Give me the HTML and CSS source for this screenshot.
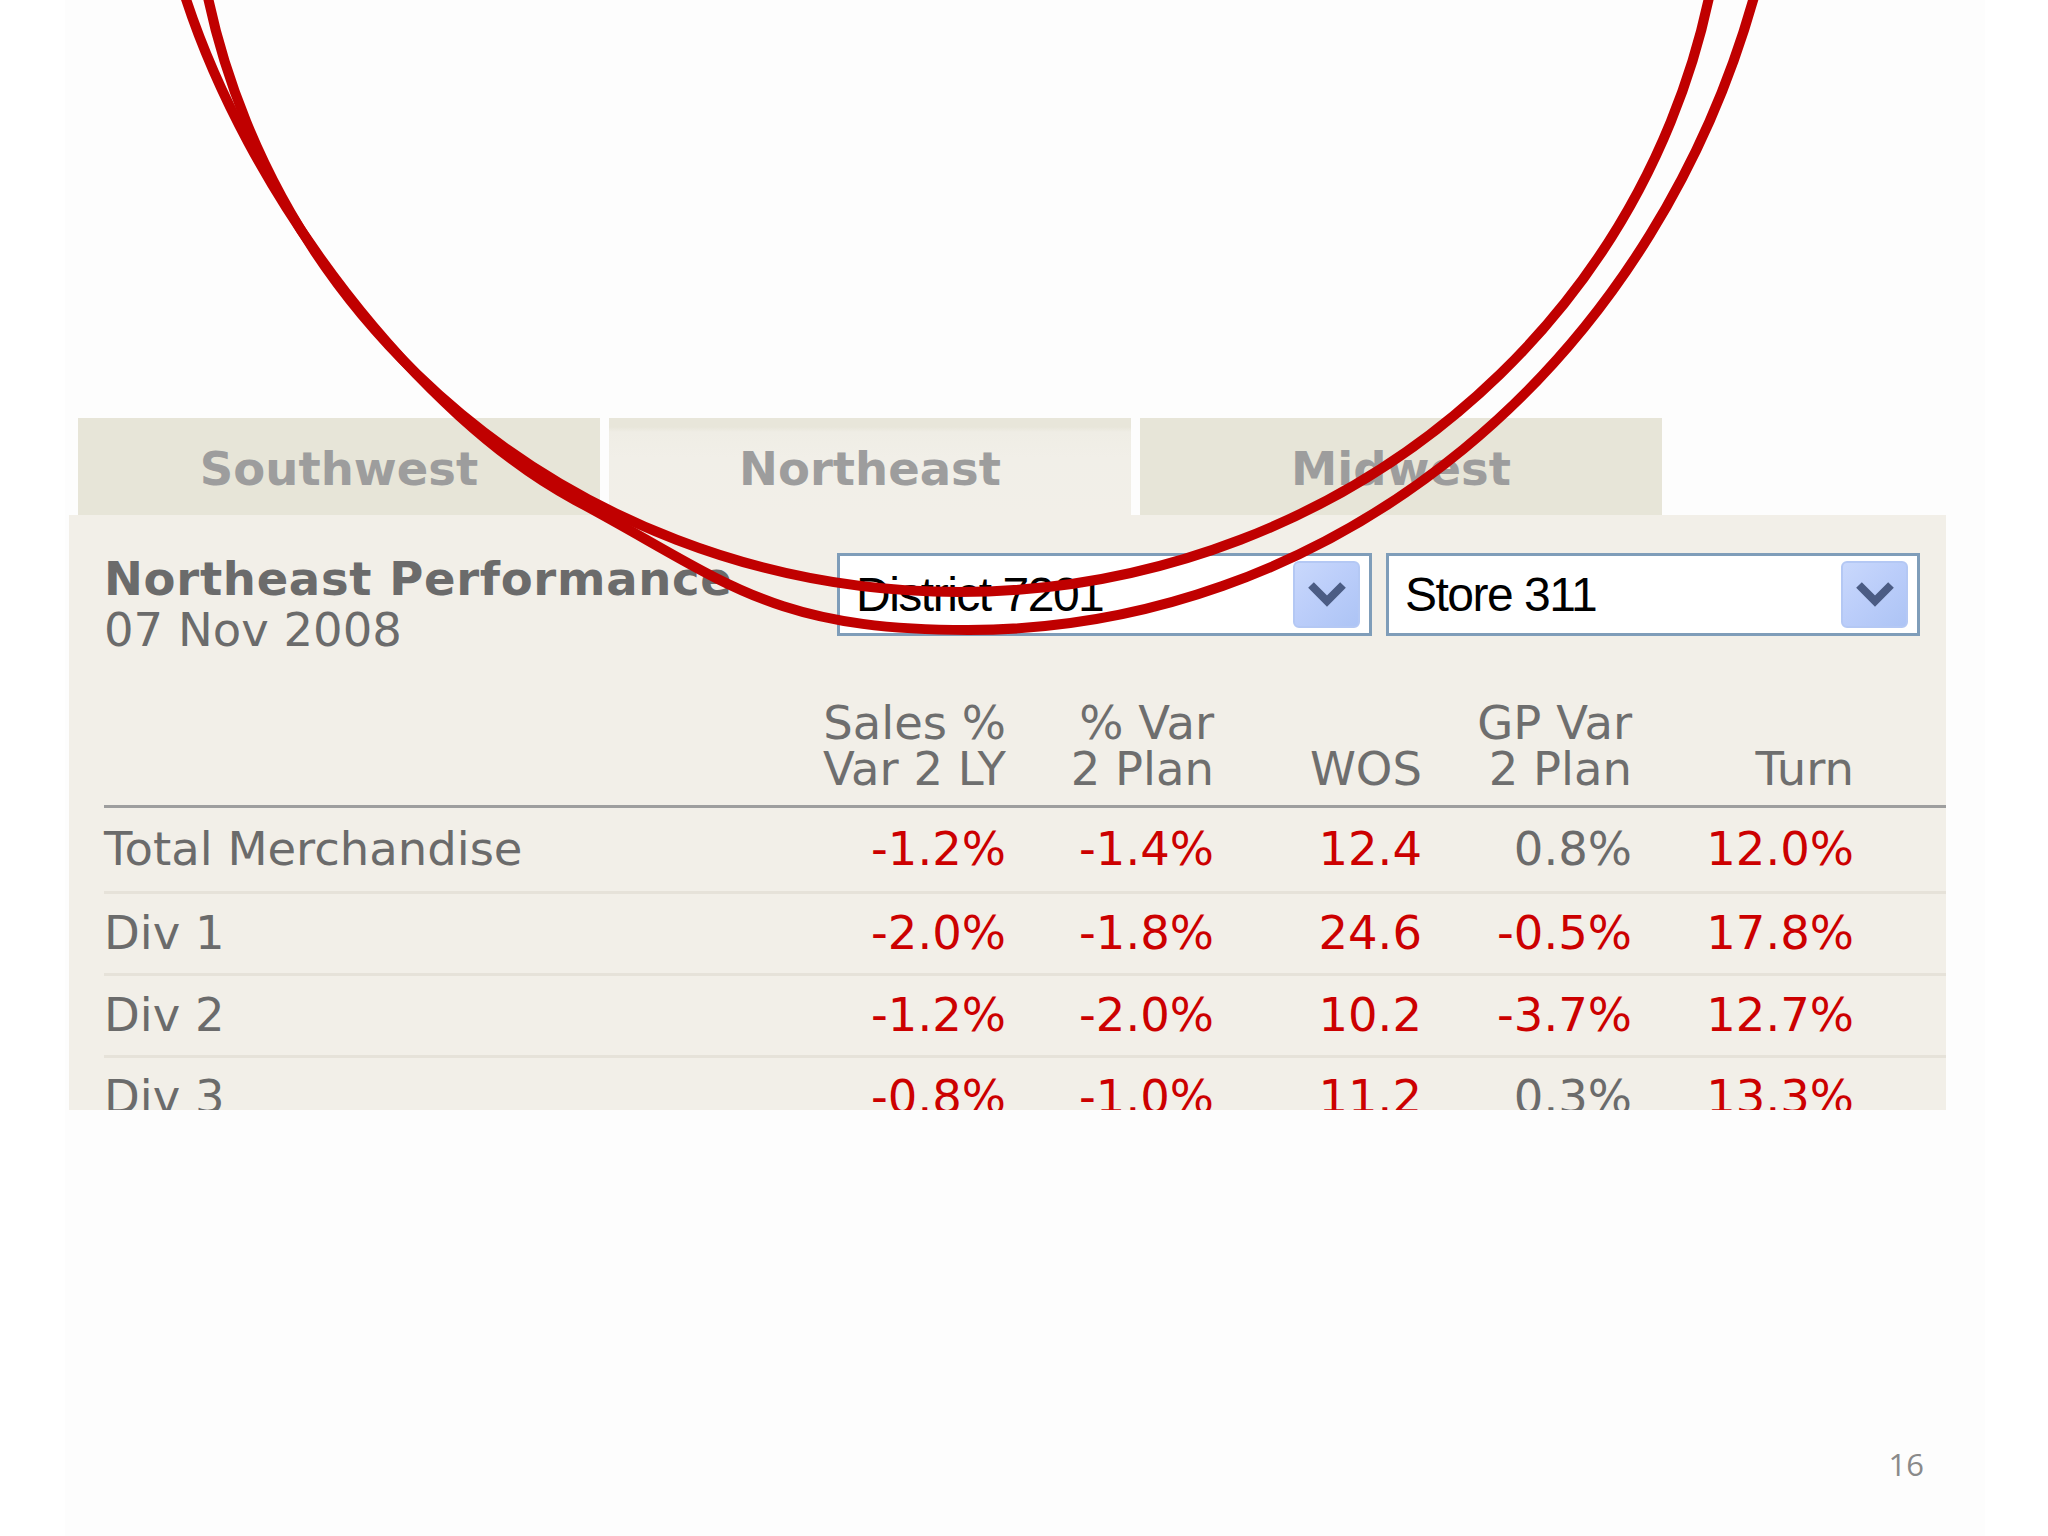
FILE: index.html
```html
<!DOCTYPE html>
<html>
<head>
<meta charset="utf-8">
<link rel="stylesheet" href="styles.css">
</head>
<body>
<div class="slide">
  <div class="canvas">
    <div class="tabs">
      <div class="tab">Southwest</div>
      <div class="tab active">Northeast</div>
      <div class="tab">Midwest</div>
    </div>
    <div class="panel">
      <div class="topbar">
        <div class="title">
          <div class="name">Northeast Performance</div>
          <div class="date">07 Nov 2008</div>
        </div>
        <div class="select district">
          <span class="value">District 7201</span>
          <span class="btn"><svg width="38" height="25" viewBox="0 0 38 25"><polyline points="3,3 19,19 35,3" fill="none" stroke="#4b5c84" stroke-width="8"/></svg></span>
        </div>
        <div class="select store">
          <span class="value">Store 311</span>
          <span class="btn"><svg width="38" height="25" viewBox="0 0 38 25"><polyline points="3,3 19,19 35,3" fill="none" stroke="#4b5c84" stroke-width="8"/></svg></span>
        </div>
      </div>
      <div class="table">
        <div class="row head">
          <div class="label"></div>
          <div class="num">Sales %<br>Var 2 LY</div>
          <div class="num">% Var<br>2 Plan</div>
          <div class="num">WOS</div>
          <div class="num">GP Var<br>2 Plan</div>
          <div class="num">Turn</div>
        </div>
        <div class="row first">
          <div class="label">Total Merchandise</div>
          <div class="num neg">-1.2%</div>
          <div class="num neg">-1.4%</div>
          <div class="num neg">12.4</div>
          <div class="num">0.8%</div>
          <div class="num neg">12.0%</div>
        </div>
        <div class="row">
          <div class="label">Div 1</div>
          <div class="num neg">-2.0%</div>
          <div class="num neg">-1.8%</div>
          <div class="num neg">24.6</div>
          <div class="num neg">-0.5%</div>
          <div class="num neg">17.8%</div>
        </div>
        <div class="row">
          <div class="label">Div 2</div>
          <div class="num neg">-1.2%</div>
          <div class="num neg">-2.0%</div>
          <div class="num neg">10.2</div>
          <div class="num neg">-3.7%</div>
          <div class="num neg">12.7%</div>
        </div>
        <div class="row">
          <div class="label">Div 3</div>
          <div class="num neg">-0.8%</div>
          <div class="num neg">-1.0%</div>
          <div class="num neg">11.2</div>
          <div class="num">0.3%</div>
          <div class="num neg">13.3%</div>
        </div>
      </div>
    </div>
    <div class="footer">16</div>
  </div>
  <svg class="annot" width="2048" height="1536" viewBox="0 0 2048 1536">
    <ellipse cx="958.5" cy="-152" rx="766" ry="744" fill="none" stroke="#c00000" stroke-width="10"/>
    <path d="M 180,-20 C 246,200 425,420 575,500 C 725,580 768,630 968,630 A 822 895 0 0 0 1758.6,-20" fill="none" stroke="#c00000" stroke-width="10"/>
  </svg>
</div>
</body>
</html>
```

FILE: styles.css
```css
html, body {
  margin: 0;
  padding: 0;
  background: #ffffff;
}

.slide {
  position: relative;
  width: 2048px;
  height: 1536px;
  overflow: hidden;
  background: #ffffff;
  display: flex;
}

.canvas {
  margin-left: 65px;
  width: 1920px;
  height: 1536px;
  box-sizing: border-box;
  padding-top: 418px;
  background: #fdfdfd;
  display: flex;
  flex-direction: column;
}

.tabs {
  display: flex;
  gap: 9px;
  padding-left: 13px;
  height: 97px;
}

.tab {
  width: 522px;
  height: 97px;
  background: #e7e5d8;
  color: #9d9d9d;
  font-family: "DejaVu Sans", Verdana, sans-serif;
  font-weight: bold;
  font-size: 46.5px;
  text-align: center;
  box-sizing: border-box;
  padding-top: 5px;
  line-height: 92px;
}

.tab.active {
  background: linear-gradient(#e8e6da 0, #e8e6da 9px, #efede5 14px, #f1efe8 40px, #f2efe8 100%);
}

.panel {
  margin-left: 4px;
  width: 1877px;
  height: 595px;
  overflow: hidden;
  background: #f2efe8;
  box-sizing: border-box;
  padding: 38px 0 0 35px;
  font-family: "DejaVu Sans", Verdana, sans-serif;
  font-size: 46.5px;
  color: #6b6b6b;
}

.topbar {
  display: flex;
  align-items: flex-start;
}

.title {
  width: 733px;
  flex: none;
  margin-top: 1px;
  line-height: 51px;
}

.name {
  font-weight: bold;
  letter-spacing: 0.7px;
  white-space: nowrap;
}

.select {
  flex: none;
  height: 83px;
  box-sizing: border-box;
  border: 3px solid #7f9db9;
  background: #ffffff;
  display: flex;
  align-items: center;
  padding: 0 9px 0 16px;
}

.district {
  width: 535px;
  margin-right: 14px;
}

.store {
  width: 534px;
}

.value {
  flex: 1;
  font-family: "Liberation Sans", Arial, sans-serif;
  font-size: 48px;
  letter-spacing: -1.5px;
  color: #000000;
  white-space: nowrap;
}

.btn {
  width: 67px;
  height: 67px;
  box-sizing: border-box;
  border-radius: 6px;
  border: 2px solid #b4c8f4;
  background: linear-gradient(135deg, #c9d8fc 0%, #bccefa 45%, #adc4f5 100%);
  display: flex;
  align-items: center;
  justify-content: center;
}

.btn svg {
  display: block;
}

.table {
  margin-top: 44px;
}

.row {
  display: grid;
  grid-template-columns: 1fr 208px 208px 208px 210px 222px;
  padding-right: 92px;
  height: 82px;
  box-sizing: border-box;
  border-bottom: 3px solid #e6e2d9;
  line-height: 79px;
  white-space: nowrap;
}

.row.first {
  height: 86px;
  line-height: 83px;
}

.row.head {
  height: 108px;
  padding-bottom: 13px;
  border-bottom: 3px solid #9e9e9e;
  line-height: 46px;
}

.row.head .num {
  align-self: end;
  color: #6e6e6e;
}

.num {
  text-align: right;
}

.label {
  text-align: left;
}

.neg {
  color: #cc0000;
}

.footer {
  margin-top: auto;
  padding: 0 61px 51px 0;
  text-align: right;
  font-family: "Open Sans", "Liberation Sans", sans-serif;
  font-size: 31px;
  line-height: 42px;
  color: #8a8a8a;
}

.annot {
  position: absolute;
  left: 0;
  top: 0;
  pointer-events: none;
}
```
